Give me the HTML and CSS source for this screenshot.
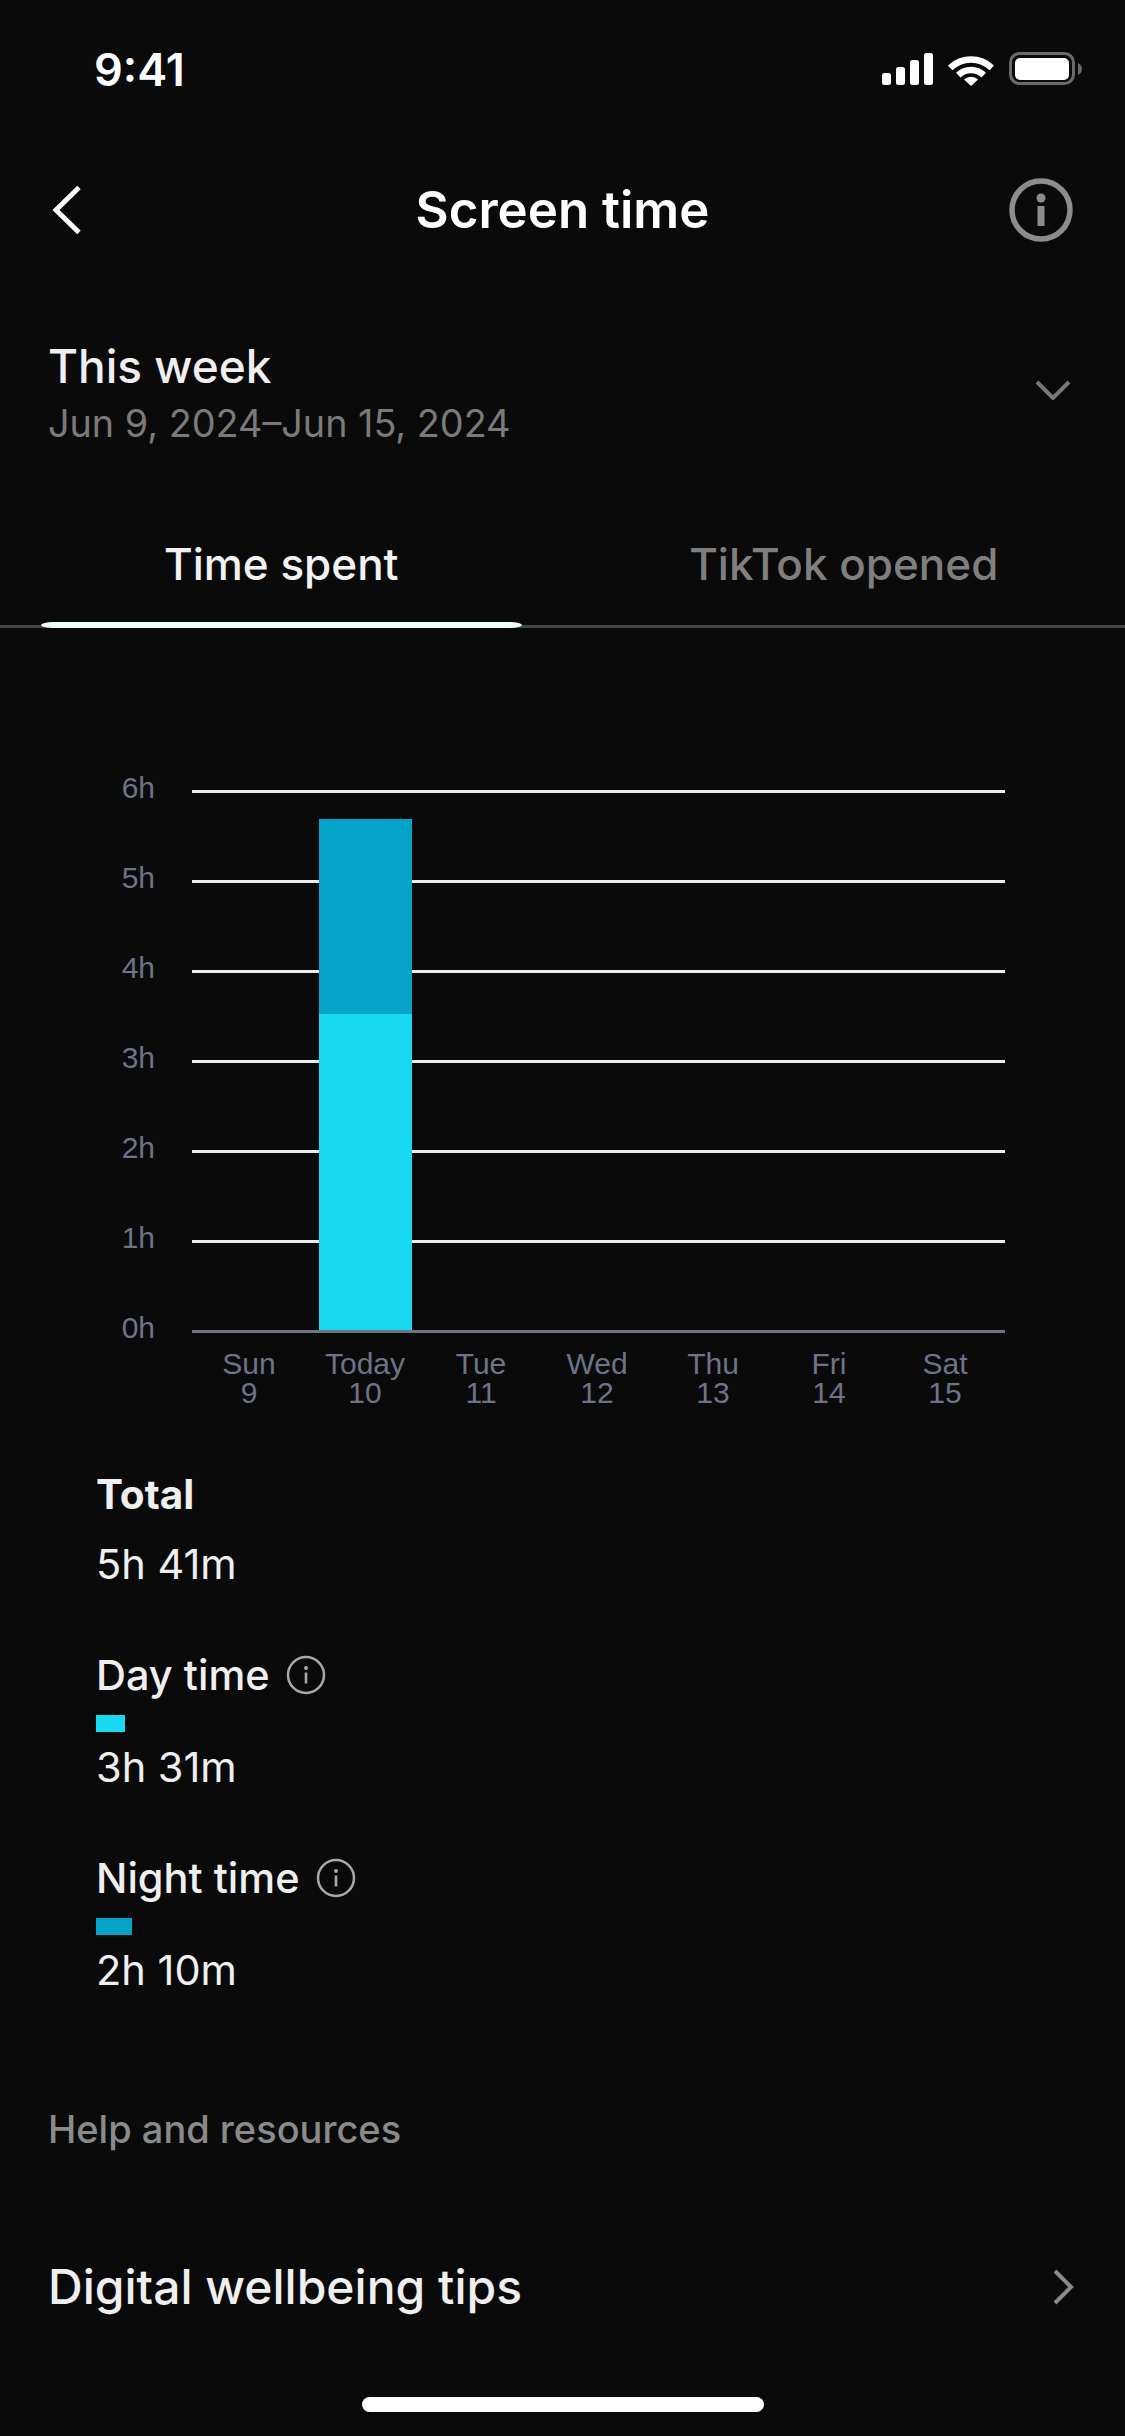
FILE: index.html
```html
<!DOCTYPE html>
<html lang="en">
<head>
<meta charset="utf-8">
<title>Screen time</title>
<link rel="stylesheet" href="styles.css">
</head>
<body>
<div class="page">
  <header class="status">
    <span class="clock">9:41</span>
    <svg class="status-icons" width="200" height="34" viewBox="0 0 200 34" aria-hidden="true">
      <rect x="0" y="21" width="9" height="12" rx="2.5" fill="#fff"/>
      <rect x="14" y="15" width="9" height="18" rx="2.5" fill="#fff"/>
      <rect x="28" y="8" width="9" height="25" rx="2.5" fill="#fff"/>
      <rect x="42" y="1" width="9" height="32" rx="2.5" fill="#fff"/>
      <path d="M66 13.5 A33 33 0 0 1 112 13.5 L107.6 18.3 A26.5 26.5 0 0 0 70.4 18.3 Z" fill="#fff"/>
      <path d="M74 21.8 A21.5 21.5 0 0 1 104 21.8 L99.5 26.5 A15 15 0 0 0 78.5 26.5 Z" fill="#fff" transform="translate(0 -1)"/>
      <path d="M82 27.5 A10 10 0 0 1 96 27.5 L89 34 Z" fill="#fff"/>
      <rect x="128.5" y="1.5" width="63" height="30" rx="9" fill="none" stroke="#6a6a6a" stroke-width="3"/>
      <rect x="133" y="6" width="54" height="22" rx="5" fill="#fff"/>
      <path d="M196 11 C199 12.5 200 14.5 200 17 C200 19.5 199 21.5 196 23 Z" fill="#6a6a6a"/>
    </svg>
  </header>

  <nav class="nav">
    <svg class="back" width="30" height="50" viewBox="0 0 30 50" aria-hidden="true">
      <path d="M27 2.500 L4 25 L27 47.500" fill="none" stroke="#fff" stroke-width="5"/>
    </svg>
    <h1 class="title">Screen time</h1>
    <svg class="info-large" width="64" height="64" viewBox="0 0 64 64" aria-hidden="true">
      <circle cx="32" cy="32" r="29" fill="none" stroke="#8c8c8c" stroke-width="5.500"/>
      <circle cx="32" cy="20" r="4.500" fill="#8c8c8c"/>
      <rect x="28.500" y="28" width="7" height="20" fill="#8c8c8c"/>
    </svg>
  </nav>

  <section class="period">
    <div class="period-text">
      <div class="period-name">This week</div>
      <div class="period-range">Jun 9, 2024–Jun 15, 2024</div>
    </div>
    <svg class="down" width="36" height="20" viewBox="0 0 36 20" aria-hidden="true">
      <path d="M2 2 L18 18 L34 2" fill="none" stroke="#777" stroke-width="4"/>
    </svg>
  </section>

  <div class="tabs">
    <div class="tab tab-active">Time spent</div>
    <div class="tab">TikTok opened</div>
  </div>

  <section class="chart">
    <div class="grid-rows">
      <div class="row"><span class="y-label">6h</span><span class="line"></span></div>
      <div class="row"><span class="y-label">5h</span><span class="line"></span></div>
      <div class="row"><span class="y-label">4h</span><span class="line"></span></div>
      <div class="row"><span class="y-label">3h</span><span class="line"></span></div>
      <div class="row"><span class="y-label">2h</span><span class="line"></span></div>
      <div class="row"><span class="y-label">1h</span><span class="line"></span></div>
      <div class="row"><span class="y-label">0h</span><span class="line line-axis"></span></div>
      <div class="bars">
        <div class="bar-col"></div>
        <div class="bar-col">
          <div class="bar bar-night"></div>
          <div class="bar bar-day"></div>
        </div>
      </div>
    </div>
    <div class="days">
      <div class="day">Sun<br>9</div>
      <div class="day">Today<br>10</div>
      <div class="day">Tue<br>11</div>
      <div class="day">Wed<br>12</div>
      <div class="day">Thu<br>13</div>
      <div class="day">Fri<br>14</div>
      <div class="day">Sat<br>15</div>
    </div>
  </section>

  <section class="stats">
    <div class="stat stat-total">
      <div class="stat-head"><span class="stat-name">Total</span></div>
      <div class="stat-value">5h 41m</div>
    </div>
    <div class="stat">
      <div class="stat-head">
        <span class="stat-name">Day time</span>
        <svg class="info-small" width="40" height="40" viewBox="0 0 40 40" aria-hidden="true">
          <circle cx="20" cy="20" r="18" fill="none" stroke="#a8a8a8" stroke-width="2.500"/>
          <circle cx="20" cy="13" r="2" fill="#a8a8a8"/>
          <rect x="18.700" y="17.500" width="2.600" height="11" fill="#a8a8a8"/>
        </svg>
      </div>
      <div class="swatch swatch-day"></div>
      <div class="stat-value">3h 31m</div>
    </div>
    <div class="stat">
      <div class="stat-head">
        <span class="stat-name">Night time</span>
        <svg class="info-small" width="40" height="40" viewBox="0 0 40 40" aria-hidden="true">
          <circle cx="20" cy="20" r="18" fill="none" stroke="#a8a8a8" stroke-width="2.500"/>
          <circle cx="20" cy="13" r="2" fill="#a8a8a8"/>
          <rect x="18.700" y="17.500" width="2.600" height="11" fill="#a8a8a8"/>
        </svg>
      </div>
      <div class="swatch swatch-night"></div>
      <div class="stat-value">2h 10m</div>
    </div>
  </section>

  <section class="help">
    <div class="help-title">Help and resources</div>
    <div class="help-row">
      <span class="help-link">Digital wellbeing tips</span>
      <svg class="right" width="22" height="36" viewBox="0 0 22 36" aria-hidden="true">
        <path d="M3 2 L19 18 L3 34" fill="none" stroke="#8a8a8a" stroke-width="4"/>
      </svg>
    </div>
  </section>

  <div class="home-bar"></div>
</div>
</body>
</html>
```

FILE: styles.css
```css
* { box-sizing: border-box; }
html, body { margin: 0; padding: 0; background: #0a0a0b; }
body { font-family: Inter, "Liberation Sans", sans-serif; color: #f0f0f0; }
.page { width: 1125px; height: 2436px; overflow: hidden; background: #0a0a0b; display: flex; flex-direction: column; }

.status { height: 138px; flex: none; display: flex; align-items: center; justify-content: space-between; padding: 0 43px 0 94px; }
.clock { font-size: 45px; font-weight: 600; color: #fff; }
.status-icons { display: block; margin-right: 0; }

.nav { height: 144px; flex: none; display: grid; grid-template-columns: 1fr auto 1fr; align-items: center; padding: 0 52px; }
.back { display: block; }
.title { margin: 0; font-size: 51px; line-height: 60px; font-weight: 600; color: #fff; }
.info-large { display: block; justify-self: end; }

.period { flex: none; margin-top: 50px; height: 116px; padding: 0 54px 0 48px; display: flex; align-items: center; justify-content: space-between; }
.period-text { padding-top: 7px; }
.period-name { font-size: 46px; line-height: 52px; font-weight: 500; color: #efefef; }
.period-range { margin-top: 6px; font-size: 37.750px; line-height: 50px; color: #7a7a7a; }
.down { display: block; }

.tabs { flex: none; margin-top: 82px; height: 98px; display: grid; grid-template-columns: 1fr 1fr; border-bottom: 3px solid #444; }
.tab { position: relative; text-align: center; padding-top: 7px; font-size: 44px; line-height: 54px; font-weight: 500; color: #7f7f7f; }
.tab-active { color: #f2f2f2; }
.tab-active::after { content: ""; position: absolute; left: 41px; right: 41px; bottom: -3px; height: 6px; border-radius: 12px / 3px; background: #eefcfc; }

.chart { flex: none; margin-top: 162px; }
.grid-rows { position: relative; display: flex; flex-direction: column; gap: 87px; }
.row { height: 3px; display: flex; align-items: center; }
.y-label { width: 155px; padding-bottom: 8px; flex: none; text-align: right; font-family: "Liberation Sans", Arial, sans-serif; font-size: 30px; line-height: 30px; color: #6f7387; }
.line { margin-left: 37px; width: 813px; height: 3px; background: #ececec; }
.line-axis { background: #6f7387; }
.bars { position: absolute; left: 191px; top: 0; bottom: 3px; display: grid; grid-template-columns: repeat(2, 116px); align-items: end; justify-items: center; }
.bar-col { width: 93px; }
.bar { width: 93px; }
.bar-night { height: 195px; background: #05a3c7; }
.bar-day { height: 316px; background: #19d9f0; }

.days { margin: 16px 0 0 191px; display: grid; grid-template-columns: repeat(7, 116px); }
.day { text-align: center; font-family: "Liberation Sans", Arial, sans-serif; font-size: 30px; line-height: 29px; color: #6f7387; }

.stats { flex: none; margin-top: 66px; padding-left: 96px; display: flex; flex-direction: column; gap: 66px; }
.stat-head { display: flex; align-items: center; gap: 16px; height: 44px; }
.stat-name { font-size: 41.500px; line-height: 44px; font-weight: 500; color: #efefef; }
.stat-total .stat-name { font-weight: 700; font-size: 40.500px; }
.stat-total .stat-value { margin-top: 24px; }
.info-small { display: block; }
.swatch { height: 17px; margin: 18px 0 12px; }
.swatch-day { width: 29px; background: #19d9f0; }
.swatch-night { width: 36px; background: #05a3c7; }
.stat-value { font-size: 41.500px; line-height: 46px; font-weight: 400; color: #efefef; }

.help { flex: none; margin-top: 113px; padding: 0 51px 0 48px; }
.help-title { font-size: 38px; line-height: 46px; font-weight: 500; color: #8a8a8a; }
.help-row { margin-top: 107px; display: flex; align-items: center; justify-content: space-between; }
.help-link { font-size: 48px; line-height: 56px; font-weight: 500; color: #efefef; }
.right { display: block; }

.home-bar { flex: none; margin: auto auto 24px; width: 402px; height: 15px; border-radius: 8px; background: #fff; }
```
